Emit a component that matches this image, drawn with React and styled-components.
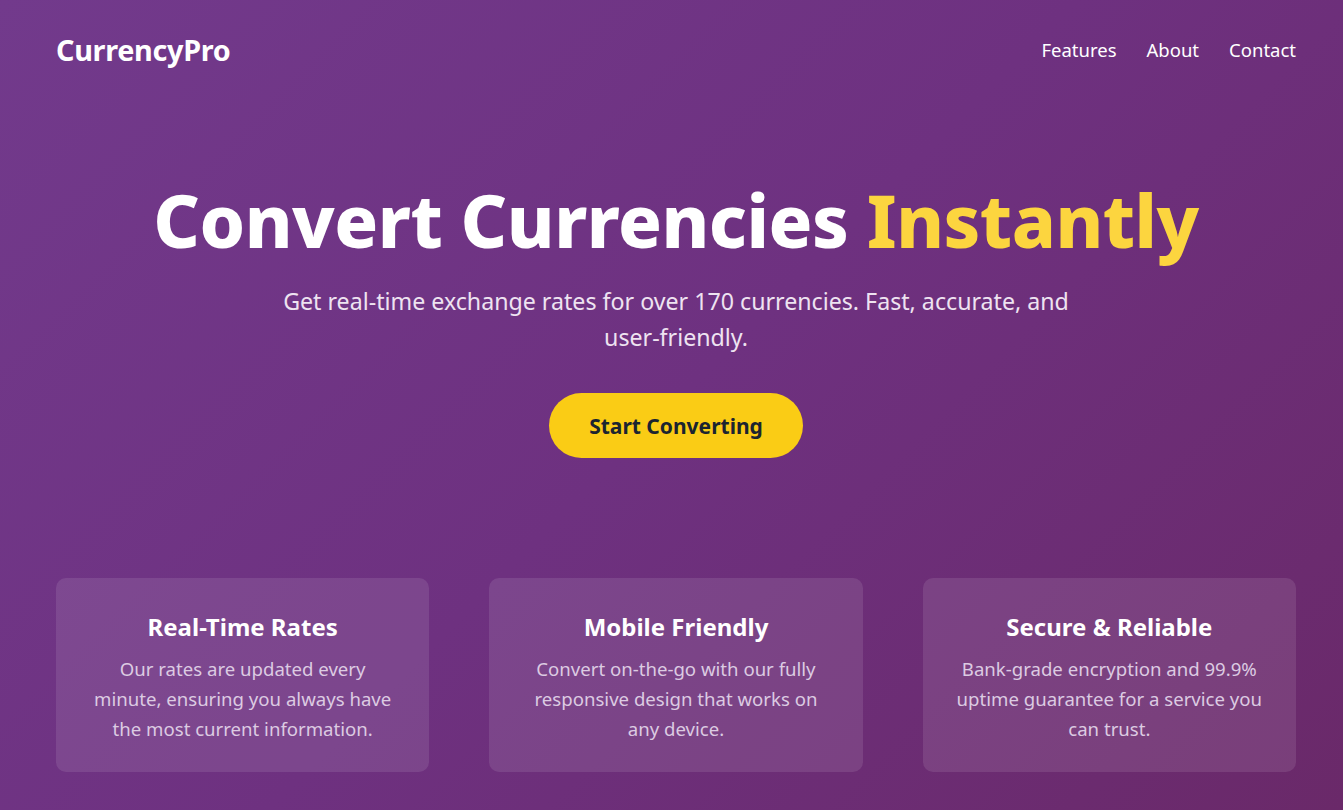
import React from "react";
import styled, { createGlobalStyle } from "styled-components";

const Global = createGlobalStyle`
  * { box-sizing: border-box; }
  html, body { margin: 0; padding: 0; }
  body {
    font-family: "Noto Sans", "Open Sans", sans-serif;
    min-height: 810px;
    background: linear-gradient(135deg, #723a8c 0%, #6e3180 50%, #6a2969 100%);
    background-attachment: fixed;
    color: #ffffff;
  }
`;

const Page = styled.div`
  min-height: 810px;
  padding: 0 47px 0 56px;
`;

const Header = styled.header`
  display: flex;
  align-items: center;
  justify-content: space-between;
  height: 99px;
`;

const Logo = styled.div`
  font-size: 28.8px;
  font-weight: 700;
  letter-spacing: -0.3px;
  color: #ffffff;
`;

const Nav = styled.nav`
  display: flex;
  gap: 30px;
`;

const NavLink = styled.a`
  font-size: 18.5px;
  color: #ffffff;
  text-decoration: none;
`;

const Hero = styled.section`
  display: flex;
  flex-direction: column;
  align-items: center;
  text-align: center;
  padding-top: 75px;
`;

const Title = styled.h1`
  margin: 0;
  font-size: 72.5px;
  font-weight: 800;
  line-height: 91px;
  letter-spacing: -0.5px;
`;

const Accent = styled.span`
  color: #fcd53f;
`;

const Subtitle = styled.p`
  margin: 18px 0 0;
  max-width: 800px;
  font-size: 23.2px;
  line-height: 36px;
  color: #eee3f1;
`;

const NoBreak = styled.span`
  white-space: nowrap;
`;

const CTA = styled.button`
  margin-top: 38px;
  height: 65px;
  padding: 0 40px;
  border: none;
  border-radius: 33px;
  background: #facc15;
  color: #1b2430;
  font-family: inherit;
  font-size: 21px;
  font-weight: 700;
  cursor: pointer;
`;

const Features = styled.section`
  display: grid;
  grid-template-columns: repeat(3, 1fr);
  gap: 60px;
  margin-top: 120px;
`;

const Card = styled.div`
  background: rgba(255, 255, 255, 0.1);
  border-radius: 10px;
  padding: 34px 28px 28px;
  text-align: center;
  height: 194px;
`;

const CardTitle = styled.h3`
  margin: 0 0 12px;
  font-size: 24px;
  font-weight: 700;
  line-height: 30px;
`;

const CardText = styled.p`
  margin: 0;
  font-size: 18.6px;
  line-height: 30px;
  color: #dccbe2;
`;

const features = [
  {
    title: "Real-Time Rates",
    text: "Our rates are updated every minute, ensuring you always have the most current information.",
  },
  {
    title: "Mobile Friendly",
    text: "Convert on-the-go with our fully responsive design that works on any device.",
  },
  {
    title: "Secure & Reliable",
    text: "Bank-grade encryption and 99.9% uptime guarantee for a service you can trust.",
  },
];

export default function App() {
  return (
    <>
      <Global />
      <Page>
        <Header>
          <Logo>CurrencyPro</Logo>
          <Nav>
            <NavLink href="#">Features</NavLink>
            <NavLink href="#">About</NavLink>
            <NavLink href="#">Contact</NavLink>
          </Nav>
        </Header>
        <Hero>
          <Title>
            Convert Currencies <Accent>Instantly</Accent>
          </Title>
          <Subtitle>
            Get real-time exchange rates for over 170 currencies. Fast, accurate, and{" "}
            <NoBreak>user-friendly.</NoBreak>
          </Subtitle>
          <CTA>Start Converting</CTA>
        </Hero>
        <Features>
          {features.map((f) => (
            <Card key={f.title}>
              <CardTitle>{f.title}</CardTitle>
              <CardText>{f.text}</CardText>
            </Card>
          ))}
        </Features>
      </Page>
    </>
  );
}
